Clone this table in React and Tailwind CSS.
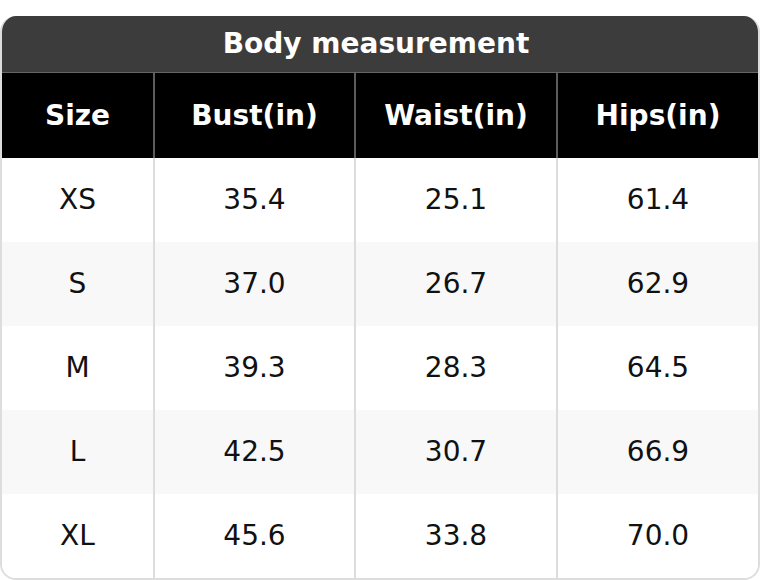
import React from "react";

const rows = [
  ["XS", "35.4", "25.1", "61.4"],
  ["S", "37.0", "26.7", "62.9"],
  ["M", "39.3", "28.3", "64.5"],
  ["L", "42.5", "30.7", "66.9"],
  ["XL", "45.6", "33.8", "70.0"],
];

const heads = ["Size", "Bust(in)", "Waist(in)", "Hips(in)"];

const App = () => {
  return (
    <div className="w-[760px] h-[580px] bg-white pt-4 font-['DejaVu_Sans',sans-serif]">
      <div className="rounded-2xl overflow-hidden border-x-2 border-b-2 border-[#dddddd]">
        {/* Title */}
        <div className="-mx-[2px] h-[57px] pr-2 bg-[#3c3c3c] flex items-center justify-center text-white font-bold text-[28px] border-b border-[#666]">
          Body measurement
        </div>

        {/* Header row */}
        <div className="grid grid-cols-[151px_201px_202px_202px] h-[85px] bg-black text-white font-bold text-[28px]">
          {heads.map((h, i) => (
            <div
              key={h}
              className={
                "flex items-center justify-center " +
                (i > 0 ? "border-l-2 border-[#5c5c5c]" : "")
              }
            >
              {h}
            </div>
          ))}
        </div>

        {/* Body rows */}
        {rows.map((r, ri) => (
          <div
            key={r[0]}
            className={
              "grid grid-cols-[151px_201px_202px_202px] h-[84px] text-[28px] text-[#111] " +
              (ri % 2 === 1 ? "bg-[#f8f8f8]" : "bg-white")
            }
          >
            {r.map((c, i) => (
              <div
                key={i}
                className={
                  "flex items-center justify-center " +
                  (i > 0 ? "border-l-2 border-[#dddddd]" : "")
                }
              >
                {c}
              </div>
            ))}
          </div>
        ))}
      </div>
    </div>
  );
};

export default App;
